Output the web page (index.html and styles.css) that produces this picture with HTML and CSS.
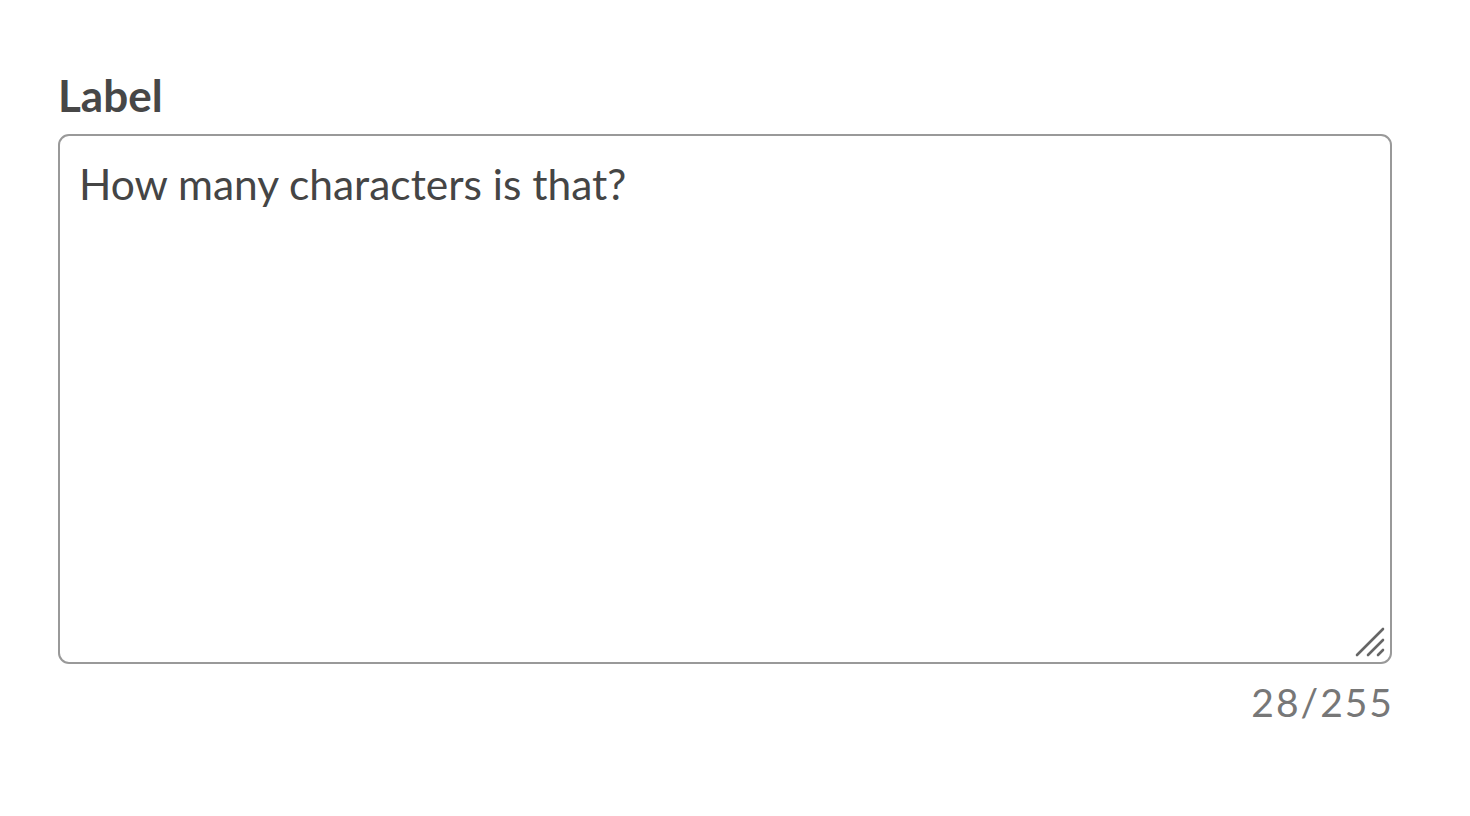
FILE: index.html
```html
<!DOCTYPE html>
<html lang="en">
<head>
<meta charset="utf-8">
<title>Textarea</title>
<link rel="stylesheet" href="styles.css">
</head>
<body>
<div class="field">
  <label class="label" for="ta">Label</label>
  <div class="box">
    <textarea id="ta" class="input">How many characters is that?</textarea>
    <svg class="grip" width="32" height="32" viewBox="0 0 32 32" aria-hidden="true">
      <path d="M3 29 L29 3 M14 29 L29 14 M24 29 L29 24" stroke="#666" stroke-width="2.6" stroke-linecap="round" fill="none"/>
    </svg>
  </div>
  <div class="counter">28/255</div>
</div>
</body>
</html>
```
FILE: styles.css
```css
html, body {
  margin: 0;
  padding: 0;
  background: #fff;
}
.field {
  width: 1334px;
  padding: 70px 0 0 58px;
  display: flex;
  flex-direction: column;
  font-family: Lato, "Noto Sans", sans-serif;
}
.label {
  font-size: 44px;
  font-weight: 700;
  color: #474747;
  line-height: 50px;
  margin-bottom: 14px;
}
.box {
  position: relative;
  height: 530px;
}
.input {
  box-sizing: border-box;
  width: 100%;
  height: 100%;
  border: 2px solid #999;
  border-radius: 11px;
  padding: 20px 19px;
  margin: 0;
  font-family: Lato, "Noto Sans", sans-serif;
  font-size: 42.5px;
  line-height: 56px;
  color: #454545;
  resize: none;
  outline: none;
  display: block;
}
.grip {
  position: absolute;
  right: 6px;
  bottom: 6px;
}
.counter {
  align-self: flex-end;
  margin-top: 14px;
  margin-right: -2px;
  font-size: 39px;
  letter-spacing: 2px;
  color: #777;
  line-height: 48px;
}
```
